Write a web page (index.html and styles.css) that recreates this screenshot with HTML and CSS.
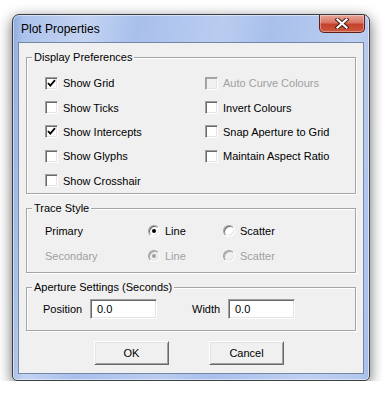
FILE: index.html
```html
<!DOCTYPE html>
<html>
<head>
<meta charset="utf-8">
<link rel="stylesheet" href="styles.css">
</head>
<body>
<div class="window">
  <div class="titlebar">
    <span class="title">Plot Properties</span>
    <div class="close">
      <svg width="14" height="11" viewBox="0 0 14 11">
        <path d="M2.5 1.5 L11.5 9.5 M11.5 1.5 L2.5 9.5" stroke="#3a1a14" stroke-width="4" stroke-linecap="square"/>
        <path d="M2.5 1.5 L11.5 9.5 M11.5 1.5 L2.5 9.5" stroke="#ffffff" stroke-width="2.2" stroke-linecap="square"/>
      </svg>
    </div>
  </div>
  <div class="client">
    <div class="group">
      <div class="legend">Display Preferences</div>
      <div class="checkgrid">
        <div class="check"><span class="box"><svg width="11" height="11" viewBox="0 0 11 11"><path d="M2 5 L4.3 7.6 L9 2.2" fill="none" stroke="#000" stroke-width="1.8"/></svg></span><span>Show Grid</span></div>
        <div class="check disabled"><span class="box"></span><span>Auto Curve Colours</span></div>
        <div class="check"><span class="box"></span><span>Show Ticks</span></div>
        <div class="check"><span class="box"></span><span>Invert Colours</span></div>
        <div class="check"><span class="box"><svg width="11" height="11" viewBox="0 0 11 11"><path d="M2 5 L4.3 7.6 L9 2.2" fill="none" stroke="#000" stroke-width="1.8"/></svg></span><span>Show Intercepts</span></div>
        <div class="check"><span class="box"></span><span>Snap Aperture to Grid</span></div>
        <div class="check"><span class="box"></span><span>Show Glyphs</span></div>
        <div class="check"><span class="box"></span><span>Maintain Aspect Ratio</span></div>
        <div class="check"><span class="box"></span><span>Show Crosshair</span></div>
      </div>
    </div>
    <div class="group trace">
      <div class="legend">Trace Style</div>
      <div class="tracegrid">
        <span class="rowlabel">Primary</span>
        <div class="radio"><span class="dot on"></span><span>Line</span></div>
        <div class="radio"><span class="dot"></span><span>Scatter</span></div>
        <span class="rowlabel disabled">Secondary</span>
        <div class="radio disabled"><span class="dot on"></span><span>Line</span></div>
        <div class="radio disabled"><span class="dot"></span><span>Scatter</span></div>
      </div>
    </div>
    <div class="group aperture">
      <div class="legend">Aperture Settings (Seconds)</div>
      <div class="fields">
        <span class="flabel">Position</span>
        <div class="input">0.0</div>
        <span class="flabel wlabel">Width</span>
        <div class="input">0.0</div>
      </div>
    </div>
    <div class="buttons">
      <div class="btn">OK</div>
      <div class="btn">Cancel</div>
    </div>
  </div>
</div>
</body>
</html>
```

FILE: styles.css
```css
html, body {
  margin: 0;
  padding: 0;
  background: #ffffff;
}
body {
  padding: 14px 0 0 12px;
  font-family: "Liberation Sans", Arial, sans-serif;
  font-size: 11px;
  color: #000;
}
.window {
  box-sizing: border-box;
  width: 358px;
  height: 367px;
  border: 1px solid #3a3d44;
  border-radius: 7px 7px 5px 5px;
  padding: 0 5px 6px 5px;
  background:
    linear-gradient(100deg, rgba(255,255,255,0) 0%, rgba(255,255,255,0.3) 18%, rgba(255,255,255,0) 30%, rgba(255,255,255,0.2) 50%, rgba(255,255,255,0) 62%, rgba(255,255,255,0.25) 85%, rgba(255,255,255,0.1) 100%),
    linear-gradient(90deg, #8eaade 0%, #a9c0ec 3%, #a9c0ec 97%, #9cb6e6 100%),
    linear-gradient(180deg, #b6cbf0 0%, #a3bbea 40%, #adc3ed 100%);
  box-shadow: 0 4px 14px rgba(0,0,0,0.6), inset 0 0 0 1px rgba(255,255,255,0.5);
  display: flex;
  flex-direction: column;
}
.titlebar {
  height: 27px;
  display: flex;
  align-items: flex-start;
  justify-content: space-between;
}
.title {
  font-size: 12px;
  margin: 7px 0 0 3px;
  color: #000;
}
.close {
  width: 46px;
  height: 18px;
  margin-right: -1px;
  box-sizing: border-box;
  border: 1px solid #5e1f16;
  border-top: none;
  border-radius: 0 0 5px 5px;
  background: linear-gradient(180deg, #e9a79b 0%, #d87563 45%, #c3412b 55%, #cf5a3f 100%);
  box-shadow: inset 0 0 0 1px rgba(255,255,255,0.35);
  display: flex;
  align-items: center;
  justify-content: center;
}
.client {
  flex: 1;
  border: 1px solid #7487a6;
  background: #f0f0f0;
  padding: 14px 7px 6px 7px;
  display: flex;
  flex-direction: column;
}
.group {
  border: 1px solid #a5a5a5;
  box-shadow: inset 1px 1px 0 #fff, 1px 1px 0 #fff;
  margin-bottom: 14px;
}
.legend {
  display: table;
  margin: -7px 0 0 5px;
  padding: 0 2px;
  line-height: 13px;
  background: #f0f0f0;
}
.checkgrid {
  display: grid;
  grid-template-columns: 160px auto;
  grid-auto-rows: 24.4px;
  margin-top: 7px;
  padding-left: 18px;
}
.check {
  display: flex;
  align-items: center;
  gap: 5px;
}
.box {
  box-sizing: border-box;
  width: 13px;
  height: 13px;
  background: #fff;
  border: 1px solid;
  border-color: #a0a0a0 #fff #fff #a0a0a0;
  box-shadow: inset 1px 1px 0 #696969, inset -1px -1px 0 #e3e3e3;
  display: flex;
  align-items: center;
  justify-content: center;
}
.box svg { display: block; }
.disabled { color: #a0a0a0; }
.check.disabled .box {
  background: #f0f0f0;
  box-shadow: inset 1px 1px 0 #a8a8a8, inset -1px -1px 0 #e3e3e3;
}
.tracegrid {
  display: grid;
  grid-template-columns: 103px 75px auto;
  grid-auto-rows: 25px;
  margin-top: 4px;
  padding: 0 0 3px 18px;
  align-items: center;
}
.radio {
  display: flex;
  align-items: center;
  gap: 5px;
}
.dot {
  box-sizing: border-box;
  width: 12px;
  height: 12px;
  border-radius: 50%;
  background: #fff;
  border: 1px solid;
  border-color: #a0a0a0 #fff #fff #a0a0a0;
  box-shadow: inset 1px 1px 0 #696969, inset -1px -1px 0 #e3e3e3;
  display: flex;
  align-items: center;
  justify-content: center;
}
.dot.on::after {
  content: "";
  width: 4px;
  height: 4px;
  border-radius: 50%;
  background: #000;
}
.radio.disabled .dot {
  background: #f0f0f0;
  box-shadow: inset 1px 1px 0 #a8a8a8, inset -1px -1px 0 #e3e3e3;
}
.radio.disabled .dot.on::after { background: #a0a0a0; }
.fields {
  display: grid;
  grid-template-columns: 47px 67px 35px 36px 67px;
  align-items: center;
  margin-top: 5px;
  padding: 0 0 11px 16px;
}
.wlabel { grid-column: 4; }
.input {
  box-sizing: border-box;
  height: 20px;
  background: #fff;
  border: 1px solid;
  border-color: #a0a0a0 #fff #fff #a0a0a0;
  box-shadow: inset 1px 1px 0 #696969, inset -1px -1px 0 #e3e3e3;
  padding-left: 6px;
  line-height: 18px;
}
.buttons {
  display: flex;
  gap: 40px;
  padding-left: 68px;
  margin-top: -4px;
}
.btn {
  box-sizing: border-box;
  width: 75px;
  height: 24px;
  background: #f0f0f0;
  border: 1px solid;
  border-color: #fff #696969 #696969 #fff;
  box-shadow: inset 1px 1px 0 #e3e3e3, inset -1px -1px 0 #a0a0a0;
  display: flex;
  align-items: center;
  justify-content: center;
}
```
